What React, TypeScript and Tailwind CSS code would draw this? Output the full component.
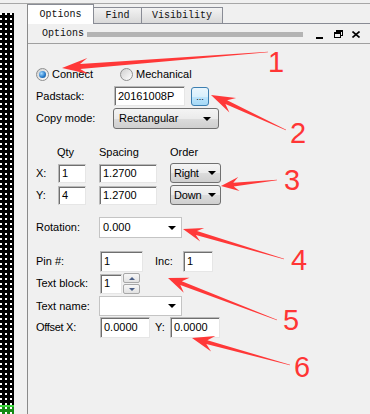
import React from 'react';

const field =
  'flex items-center bg-white border border-[#b9b9b9] border-r-[#e6e6e6] border-b-[#e6e6e6] shadow-[inset_1px_1px_0_#6f6f6f] pl-[3px]';
const dropBtn =
  'flex items-center justify-between rounded-[3px] border border-[#707070] bg-[linear-gradient(#f4f4f4,#ebebeb_50%,#dcdcdc_51%,#cfcfcf)] pl-[5px] pr-[7px]';
const combo = 'flex items-center justify-between bg-white border border-[#c4c4c4] pl-[3px] pr-[5px]';

function Caret() {
  return <div className="w-0 h-0 border-x-[4px] border-x-transparent border-t-[4px] border-t-black" />;
}

function Radio({ checked }: { checked?: boolean }) {
  return (
    <div className="w-[13px] h-[13px] rounded-full border border-[#8e8f8f] bg-[linear-gradient(135deg,#cfcfcf,#ffffff)] flex items-center justify-center">
      {checked && (
        <div className="w-[7px] h-[7px] rounded-full bg-[radial-gradient(circle_at_35%_35%,#a8dcff,#2a7fce_55%,#0d427c)]" />
      )}
    </div>
  );
}

function Tabs() {
  return (
    <div className="flex items-end h-[20px] font-['Liberation_Mono',monospace] text-[10px] text-[#111]">
      <div className="w-[66px] h-[20px] bg-white border-t border-r border-[#898c95] flex items-center justify-center">
        Options
      </div>
      <div className="w-[48px] h-[17px] bg-[linear-gradient(#f3f3f3,#e6e6e6_50%,#d9d9d9)] border-t border-r border-b border-[#898c95] flex items-center justify-center">
        Find
      </div>
      <div className="w-[81px] h-[17px] bg-[linear-gradient(#f3f3f3,#e6e6e6_50%,#d9d9d9)] border-t border-r border-b border-[#898c95] flex items-center justify-center">
        Visibility
      </div>
      <div className="flex-1 h-[17px] border-b border-[#898c95]" />
    </div>
  );
}

function TitleBar() {
  return (
    <div className="h-[19px] flex items-center pl-[14px] font-['Liberation_Mono',monospace] text-[10px] text-[#111]">
      <span className="w-[45px]">Options</span>
      <div className="w-[216px] h-[5px] bg-[#b4b4b4] mt-[2px]" />
      <div className="ml-[13px] w-[7px] h-[2px] bg-black mt-[9px]" />
      <svg className="ml-[11px] mt-[1px]" width="9" height="8" viewBox="0 0 9 8">
        <rect x="2.5" y="0.5" width="6" height="5" fill="none" stroke="#000" />
        <rect x="2" y="0" width="7" height="2" fill="#000" />
        <rect x="0.5" y="2.5" width="6" height="5" fill="#f0f0f0" stroke="#000" />
        <rect x="0" y="2" width="7" height="2" fill="#000" />
      </svg>
      <svg className="ml-[9px] mt-[1px]" width="8" height="7" viewBox="0 0 8 7">
        <path d="M0.5 0.5 L7.5 6.5 M7.5 0.5 L0.5 6.5" stroke="#000" strokeWidth="1.6" />
      </svg>
    </div>
  );
}

function LeftStrip() {
  const dots = 'bg-[radial-gradient(circle_at_1px_1px,#ffffff_0.8px,transparent_1px)] bg-[length:5px_5px]';
  return (
    <div className="w-[14px] flex flex-col">
      <div className="h-[9px]" />
      <div className={`flex-1 bg-black ${dots}`} />
      <div className={`h-[9px] bg-[#158a15] border-t-2 border-[#3bd53b] ${dots}`} />
    </div>
  );
}

function Spinner() {
  return (
    <div className="w-[17px] h-[21px] flex flex-col gap-px">
      <div className="flex-1 border border-[#a8a8a8] rounded-[2px] bg-[linear-gradient(#f7f7f7,#e2e2e2)] flex items-center justify-center">
        <div className="w-0 h-0 border-x-[3px] border-x-transparent border-b-[3px] border-b-[#4b5f86]" />
      </div>
      <div className="flex-1 border border-[#a8a8a8] rounded-[2px] bg-[linear-gradient(#f7f7f7,#e2e2e2)] flex items-center justify-center">
        <div className="w-0 h-0 border-x-[3px] border-x-transparent border-t-[3px] border-t-[#4b5f86]" />
      </div>
    </div>
  );
}

function Form() {
  return (
    <div className="pl-[8px]">
      {/* connect / mechanical */}
      <div className="mt-[24px] h-[13px] flex items-center">
        <div className="w-[84px] flex items-center gap-[3px]">
          <Radio checked />
          <span>Connect</span>
        </div>
        <div className="flex items-center gap-[3px]">
          <Radio />
          <span>Mechanical</span>
        </div>
      </div>

      <div className="mt-[5px] h-[20px] flex items-center">
        <span className="w-[78px]">Padstack:</span>
        <div className={`${field} w-[71px] h-[20px]`}>20161008P</div>
        <div className="ml-[6px] w-[18px] h-[19px] rounded-[3px] border border-[#3c7fb1] bg-[linear-gradient(#eaf6fd,#d9f0fc_50%,#bee6fd_51%,#a7d9f5)] flex items-end justify-center pb-[3px] text-[9px]">
          ...
        </div>
      </div>

      <div className="mt-[2px] h-[21px] flex items-center">
        <span className="w-[77px]">Copy mode:</span>
        <div className={`${dropBtn} w-[106px] h-[21px]`}>
          <span>Rectangular</span>
          <Caret />
        </div>
      </div>

      <div className="mt-[17px] h-[12px] flex items-center">
        <span className="w-[21px]" />
        <span className="w-[42px]">Qty</span>
        <span className="w-[71px]">Spacing</span>
        <span>Order</span>
      </div>

      {[
        ['X:', '1', 'Right'],
        ['Y:', '4', 'Down'],
      ].map(([l, q, o], i) => (
        <div key={l} className={`${i === 0 ? 'mt-[5px]' : 'mt-[2px]'} h-[20px] flex items-center`}>
          <span className="w-[22px]">{l}</span>
          <div className={`${field} w-[28px] h-[19px]`}>{q}</div>
          <div className="w-[13px]" />
          <div className={`${field} w-[58px] h-[19px]`}>1.2700</div>
          <div className="w-[13px]" />
          <div className="flex items-center justify-between rounded-[3px] border border-[#707070] bg-[linear-gradient(#f4f4f4,#ebebeb_50%,#dcdcdc_51%,#cfcfcf)] pl-[3px] pr-[4px] w-[51px] h-[20px] tracking-[-0.2px]">
            <span>{o}</span>
            <Caret />
          </div>
        </div>
      ))}

      <div className="mt-[12px] h-[21px] flex items-center">
        <span className="w-[63px]">Rotation:</span>
        <div className={`${combo} w-[83px] h-[21px]`}>
          <span>0.000</span>
          <Caret />
        </div>
      </div>

      <div className="mt-[13px] h-[21px] flex items-center">
        <span className="w-[64px]">Pin #:</span>
        <div className={`${field} w-[43px] h-[21px]`}>1</div>
        <span className="ml-[12px] w-[28px]">Inc:</span>
        <div className={`${field} w-[30px] h-[21px]`}>1</div>
      </div>

      <div className="mt-[1px] h-[21px] flex items-center">
        <span className="w-[64px]">Text block:</span>
        <div className={`${field} w-[22px] h-[20px]`}>1</div>
        <div className="ml-[1px]">
          <Spinner />
        </div>
      </div>

      <div className="mt-[2px] h-[20px] flex items-center">
        <span className="w-[63px]">Text name:</span>
        <div className={`${combo} w-[83px] h-[20px]`}>
          <span />
          <Caret />
        </div>
      </div>

      <div className="mt-[1px] h-[21px] flex items-center">
        <span className="w-[64px] tracking-[-0.3px]">Offset X:</span>
        <div className={`${field} w-[50px] h-[21px]`}>0.0000</div>
        <span className="ml-[5px] w-[15px]">Y:</span>
        <div className={`${field} w-[50px] h-[21px]`}>0.0000</div>
      </div>
    </div>
  );
}

function arrowPoints(tx: number, ty: number, px: number, py: number, L: number, H: number, w: number) {
  const dx = px - tx;
  const dy = py - ty;
  const len = Math.hypot(dx, dy);
  const ux = dx / len;
  const uy = dy / len;
  const nx = -uy;
  const ny = ux;
  const jx = px - ux * L * 0.7;
  const jy = py - uy * L * 0.7;
  const bx = px - ux * L;
  const by = py - uy * L;
  const pts = [
    [tx + nx * 0.3, ty + ny * 0.3],
    [jx + (nx * w) / 2, jy + (ny * w) / 2],
    [bx + nx * H, by + ny * H],
    [px, py],
    [bx - nx * H, by - ny * H],
    [jx - (nx * w) / 2, jy - (ny * w) / 2],
    [tx - nx * 0.3, ty - ny * 0.3],
  ];
  return pts.map(p => p.map(v => v.toFixed(1)).join(',')).join(' ');
}

const arrows: [number, number, number, number, number, number, number][] = [
  [268, 52, 62, 68, 26, 8, 5],
  [286, 130, 211, 95, 24, 8, 4],
  [277, 180, 221, 186, 18, 7, 4],
  [284, 259, 183, 229, 20, 7, 4],
  [277, 320, 168, 278, 20, 8, 4],
  [290, 365, 192, 338, 22, 8, 4],
];

const labels: [string, number, number][] = [
  ['1', 276, 72],
  ['2', 298, 143],
  ['3', 292, 190],
  ['4', 299, 270],
  ['5', 291, 330],
  ['6', 302, 377],
];

function Annotations() {
  return (
    <svg className="absolute inset-0 pointer-events-none" width="370" height="414" viewBox="0 0 370 414">
      {arrows.map((a, i) => (
        <polygon key={i} points={arrowPoints(...a)} fill="#ff3838" />
      ))}
      {labels.map(([t, x, y]) => (
        <text key={t} x={x} y={y} textAnchor="middle" fontSize="29" fontFamily="Liberation Sans, Arial, sans-serif" fill="#ff3535">
          {t}
        </text>
      ))}
    </svg>
  );
}

export default function App() {
  return (
    <div className="relative w-[370px] h-[414px] overflow-hidden bg-[#f0f0f0] font-['Liberation_Sans',Arial,sans-serif] text-[11px] leading-none text-black">
      <div className="h-[3px]" />
      <div className="h-px bg-[#a7a7a7]" />
      <div className="flex h-[410px]">
        <LeftStrip />
        <div className="w-[13px]" />
        <div className="flex-1 flex flex-col border-l border-[#8a8a8a]">
          <Tabs />
          <TitleBar />
          <div className="flex-1 border-t border-[#a0a0a0]">
            <Form />
          </div>
        </div>
      </div>
      <Annotations />
    </div>
  );
}
